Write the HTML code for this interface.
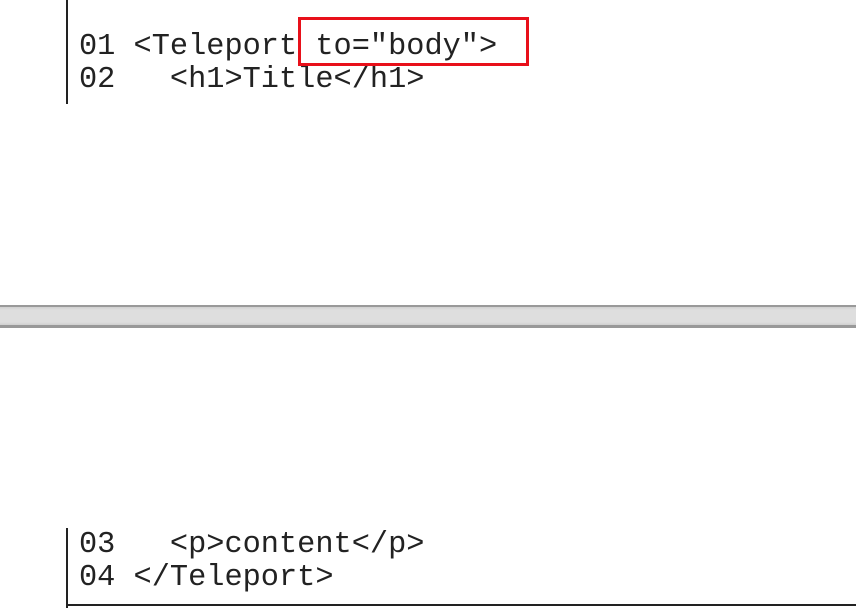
<!DOCTYPE html>
<html><head><style>
body{margin:0;width:856px;height:608px;background:#fff;position:relative;overflow:hidden;font-family:"Courier New","Liberation Mono",monospace;}
.t{position:absolute;left:79px;font-size:30.3px;line-height:33px;white-space:pre;color:#222;}
</style></head><body>
<div style="position:absolute;left:66px;top:0;width:2px;height:104px;background:#222"></div>
<div class="t" style="top:31px">01 &lt;Teleport to="body"&gt;
02   &lt;h1&gt;Title&lt;/h1&gt;</div>
<div style="position:absolute;left:298px;top:17px;width:225px;height:43px;border:3px solid #e8101a"></div>
<div style="position:absolute;left:0;top:305px;width:856px;height:23px;background:linear-gradient(#999 0,#999 2px,#d0d0d0 2px,#dedede 5px,#dedede 17px,#d0d0d0 20px,#999 20px,#999 23px)"></div>
<div style="position:absolute;left:66px;top:528px;width:2px;height:80px;background:#222"></div>
<div style="position:absolute;left:66px;top:604px;width:790px;height:2px;background:#222"></div>
<div class="t" style="top:529px">03   &lt;p&gt;content&lt;/p&gt;
04 &lt;/Teleport&gt;</div>
</body></html>
